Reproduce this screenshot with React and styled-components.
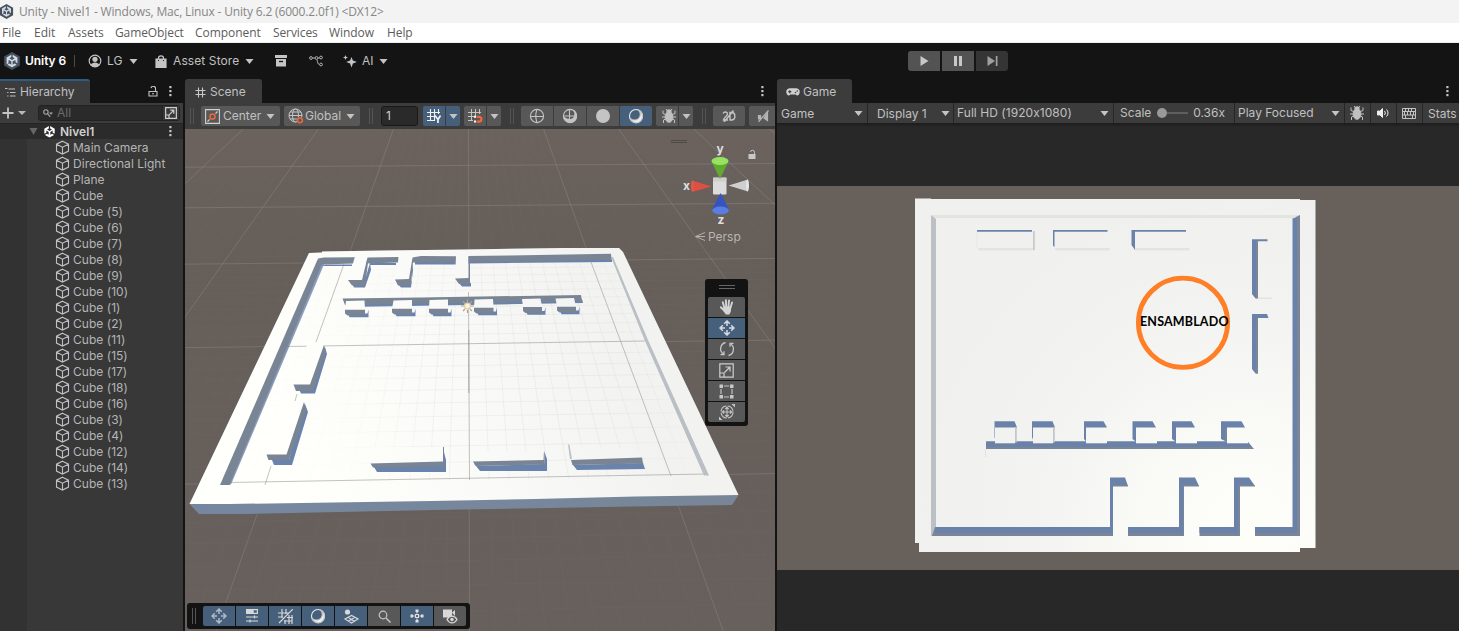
import React from "react";
import styled, { createGlobalStyle } from "styled-components";

const Global = createGlobalStyle`
  * { box-sizing: border-box; }
  html, body { margin: 0; padding: 0; background: #141414; overflow: hidden; }
  svg { display: block; flex: none; }
`;

const Editor = styled.div`
  width: 1459px;
  height: 631px;
  display: flex;
  flex-direction: column;
  overflow: hidden;
  background: #141414;
  color: #c0c0c0;
  font-family: Inter, "Liberation Sans", sans-serif;
  font-size: 12px;
  font-feature-settings: "calt" 0;
  white-space: nowrap;
`;

const TitleBar = styled.div`
  height: 23px;
  flex: none;
  display: flex;
  align-items: center;
  background: #f3f3f3;
  color: #868686;
  font: 12px/22px "Open Sans", "Noto Sans", sans-serif;
  gap: 6px;
`;

const TitleText = styled.span`
  letter-spacing: -0.16px;
`;

const MenuBar = styled.div`
  height: 20px;
  flex: none;
  display: flex;
  background: #fff;
  border-bottom: 1px solid #e9eeee;
  color: #5c5c5c;
  font: 12px/19px "Open Sans", "Noto Sans", sans-serif;
  padding-left: 2px;
`;

const MenuItem = styled.span`
  width: ${(p) => p.$w}px;
  letter-spacing: ${(p) => p.$ls || 0}px;
`;

const MainToolbar = styled.div`
  height: 36px;
  flex: none;
  display: flex;
  align-items: center;
  padding-left: 3px;
`;

const Label = styled.span`
  width: ${(p) => (p.$w ? `${p.$w}px` : "auto")};
  margin-left: ${(p) => p.$ml || 0}px;
  letter-spacing: ${(p) => p.$ls || 0}px;
  font-weight: ${(p) => (p.$bold ? 600 : 400)};
  color: ${(p) => p.$color || "inherit"};
  line-height: 16px;
  flex: none;
`;

const Slot = styled.span`
  width: ${(p) => p.$w}px;
  margin-left: ${(p) => p.$ml || 0}px;
  display: flex;
  justify-content: center;
  flex: none;
`;

const Divider = styled.span`
  width: 1px;
  height: 12px;
  background: #4a4a4a;
  flex: none;
`;

const PlayGroup = styled.div`
  display: flex;
  gap: 2px;
  margin-left: ${(p) => p.$ml}px;
`;

const PlayButton = styled.div`
  width: 32px;
  height: 20px;
  display: flex;
  align-items: center;
  justify-content: center;
  background: ${(p) => (p.$dim ? "#353535" : "#535353")};
  border-radius: ${(p) => p.$r || 0};
`;

const Workspace = styled.div`
  flex: 1;
  display: flex;
  gap: 2px;
  min-height: 0;
`;

const Panel = styled.section`
  width: ${(p) => p.$w}px;
  flex: none;
  display: flex;
  flex-direction: column;
  min-height: 0;
`;

const TabStrip = styled.div`
  height: 24px;
  flex: none;
  display: flex;
  align-items: center;
`;

const Tab = styled.div`
  width: ${(p) => p.$w}px;
  height: 24px;
  padding-left: ${(p) => p.$pl}px;
  display: flex;
  align-items: center;
  background: #3c3c3c;
  border-top: ${(p) => (p.$active ? "2px solid #2c5d87" : "2px solid #3c3c3c")};
  border-radius: ${(p) => (p.$active ? "0 3px 0 0" : "3px 3px 0 0")};
  flex: none;
`;

const HierarchyTools = styled.div`
  height: 20px;
  flex: none;
  display: flex;
  align-items: center;
  background: #3c3c3c;
  padding-left: 2px;
`;

const SearchBox = styled.div`
  width: 142px;
  height: 16px;
  margin-left: 12px;
  display: flex;
  align-items: center;
  background: #2a2a2a;
  border: 1px solid #222;
  border-radius: 3px;
  color: #6c6c6c;
`;

const SearchAction = styled.div`
  width: 17px;
  height: 14px;
  margin-left: auto;
  display: flex;
  align-items: center;
  justify-content: center;
  background: #383838;
  border-left: 1px solid #222;
`;

const SceneRow = styled.div`
  height: 16px;
  flex: none;
  display: flex;
  align-items: center;
  background: #2b2b2b;
  border-top: 1px solid #242424;
  padding-left: 29px;
`;

const Tree = styled.div`
  flex: 1;
  padding-left: 27px;
  background: linear-gradient(90deg, #323232 27px, #383838 27px);
`;

const TreeRow = styled.div`
  height: 16px;
  padding-left: 28px;
  display: flex;
  align-items: center;
  gap: 3px;
  color: #b5b5b5;
  line-height: 15px;
  letter-spacing: 0.03px;
`;

const SceneTools = styled.div`
  height: 26px;
  flex: none;
  display: flex;
  align-items: center;
  background: #3c3c3c;
  padding-left: 5px;
  overflow: hidden;
`;

const Grip = styled.span`
  width: 4px;
  height: 16px;
  margin-left: ${(p) => p.$ml || 0}px;
  border-left: 1px solid #555;
  border-right: 1px solid #555;
  flex: none;
`;

const ToolButton = styled.div`
  width: ${(p) => p.$w}px;
  height: 20px;
  margin-left: ${(p) => p.$ml || 0}px;
  padding-left: ${(p) => p.$pl || 0}px;
  display: flex;
  align-items: center;
  justify-content: ${(p) => (p.$pl ? "flex-start" : "center")};
  background: ${(p) => (p.$on ? "#46607c" : "#585858")};
  border-radius: ${(p) => p.$r || "2px"};
  flex: none;
`;

const NumberField = styled.div`
  width: 37px;
  height: 20px;
  margin-left: 8px;
  padding-left: 4px;
  background: #2a2a2a;
  border: 1px solid #191919;
  border-radius: 3px;
  line-height: 18px;
  color: #d0d0d0;
  flex: none;
`;

const Viewport = styled.div`
  position: relative;
  flex: 1;
  min-height: 0;
`;

const ToolPalette = styled.div`
  position: absolute;
  left: 520px;
  top: 150px;
  width: 43px;
  height: 147px;
  padding: 0 3px;
  background: #131313;
  border-radius: 3px;
  display: flex;
  flex-direction: column;
  gap: 1px;
`;

const PaletteGrip = styled.div`
  width: 16px;
  height: 4px;
  margin: 6px auto 7px;
  border-top: 1px solid #666;
  border-bottom: 1px solid #666;
  flex: none;
`;

const OverlayBar = styled.div`
  position: absolute;
  left: 2px;
  top: 474px;
  width: 283px;
  height: 26px;
  padding-left: 5px;
  background: #131313;
  border-radius: 3px;
  display: flex;
  align-items: center;
`;

const OverlayButtons = styled.div`
  display: flex;
  gap: 1px;
  margin-left: 7px;
`;

const GameTools = styled.div`
  height: 20px;
  flex: none;
  display: flex;
  align-items: center;
  background: #3c3c3c;
  overflow: hidden;
`;

const GameCell = styled.div`
  width: ${(p) => p.$w}px;
  height: 20px;
  padding-left: ${(p) => p.$pl || 0}px;
  padding-right: ${(p) => p.$pr || 0}px;
  display: flex;
  align-items: center;
  justify-content: ${(p) => (p.$center ? "center" : "space-between")};
  border-right: ${(p) => (p.$last ? 0 : "1px solid #262626")};
  flex: none;
`;

const Slider = styled.span`
  width: 31px;
  height: 10px;
  display: flex;
  align-items: center;
  &::before { content: ""; width: 10px; height: 10px; border-radius: 50%; background: #999; }
  &::after { content: ""; flex: 1; height: 2px; background: #5e5e5e; }
`;

const Letterbox = styled.div`
  flex: 1;
  padding-top: 63px;
  background: linear-gradient(#1c1c1c, #282828 4px);
`;

/* ---------- icons ---------- */

const Icon = ({ s = 14, w, h, children, c = "#c4c4c4", sw = 1.2 }) => (
  <svg width={w || s} height={h || s} viewBox={`0 0 ${w || s} ${h || s}`} fill="none" stroke={c} strokeWidth={sw}>
    {children}
  </svg>
);

const Arrow = ({ c = "#c4c4c4" }) => (
  <Icon w={9} h={5} c="none"><path d="M0.5 0h8l-4 5z" fill={c} /></Icon>
);

const Dots = () => (
  <Icon w={3} h={11} c="none">
    <g fill="#c4c4c4"><rect x=".3" y="0" width="2.2" height="2.2" /><rect x=".3" y="4" width="2.2" height="2.2" /><rect x=".3" y="8" width="2.2" height="2.2" /></g>
  </Icon>
);

const UnityMark = ({ s = 16, plain }) => (
  <svg width={s} height={s} viewBox="0 0 16 16">
    {!plain && <path d="M8 0l7 4v8l-7 4-7-4V4z" fill="#46525f" />}
    <path d={plain ? "M7.2 1.2v3L5 5.6l3 1.7 3-1.7-2.2-1.4v-3l5.6 3.3v6.4l-2.5-1.4V6.7L9 8.5v3.6l2.2-1.3 2.5 1.4L8 15.3l-5.7-3.1 2.5-1.4L7 12.1V8.5L4.1 6.7v2.8l-2.5 1.4V4.5z" : "M7.4 2.5v2L5.6 5.6 8 7l2.4-1.4-1.8-1.1v-2l4.2 2.4v5l-1.7-1V7L8.6 8.3v3l1.8-1 1.7 1L8 13.6l-4.1-2.3 1.7-1 1.8 1v-3L4.9 7v2.9l-1.7 1v-6z"} fill={plain ? "#fff" : "#d5dbe2"} />
  </svg>
);

const CubeIcon = () => (
  <Icon s={15} c="#c0c0c0" sw={1.1}>
    <path d="M7.5 1.2l6 3v6.9l-6 3-6-3V4.2z M1.5 4.2l6 3 6-3 M7.5 7.2v6.9" />
  </Icon>
);

const BugIcon = () => (
  <Icon s={16} c="#c0c0c0" sw={1}>
    <ellipse cx="8" cy="9" rx="3.9" ry="5.3" fill="#c0c0c0" />
    <circle cx="8" cy="3.8" r="2.6" fill="#c0c0c0" stroke="none" />
    <path d="M5 1l1.5 2M11 1L9.500 3M4.500 6.500L2 5.500V2.500M11.500 6.500L14 5.500V2.500M4.500 9H1M11.500 9h3.500M4.500 11L2.500 12v3M11.500 11l2 1v3" />
  </Icon>
);

const GridGlyph = ({ c = "#c8c8c8" }) => (
  <Icon s={11} c={c} sw={1.1}><path d="M3.500 .5v10M7.500 .5v10M.5 3.500h10M.5 7.500h10" /></Icon>
);

const MoveIcon = ({ c = "#d4dbe3", s = 16 }) => (
  <svg width={s} height={s} viewBox="0 0 16 16" fill="none" stroke={c} strokeWidth="1.500">
    <path d="M8 1.500v4.500M8 10v4.500M1.500 8H6M10 8h4.500M5.200 3.800L8 1l2.800 2.800M5.200 12.200L8 15l2.800-2.800M3.800 5.200L1 8l2.800 2.800M12.200 5.200L15 8l-2.800 2.800" />
  </svg>
);

const HandIcon = () => (
  <Icon s={16} c="none">
    <g stroke="#d4d4d4" strokeWidth="1.900" strokeLinecap="round">
      <path d="M5.300 8.500L3.800 3.200M7.200 8L6.900 1.300M9.400 8l.6-6.500M11.300 9l1.800-5.500M5.500 11.800L1.800 8.300" />
    </g>
    <path d="M4.600 7.500h7.700l-.5 5L10.300 15.500H6.800L4 11.500z" fill="#d4d4d4" />
  </Icon>
);

const RotateIcon = () => (
  <Icon s={16} sw={1.3}><path d="M6.500 1.500A6.500 6.500 0 0 0 4.500 13.200M9.500 14.500A6.500 6.500 0 0 0 11.500 2.800M1.500 13.700h3.500v-3.500M14.500 2.300H11v3.500" /></Icon>
);

const ScaleIcon = ({ s = 15 }) => (
  <svg width={s} height={s} viewBox="0 0 15 15" fill="none" stroke="#cdcdcd" strokeWidth={s < 15 ? 1.500 : 1.200}><path d="M.8.800h13.400v13.400H.800zM.8 10h4.200v4.200M5.500 9.500l5-5M6.500 4h4.500v4.500" /></svg>
);

const RectIcon = () => (
  <Icon s={15}><path d="M5 2h5M5 13h5M2 5v5M13 5v5" /><g fill="#c8c8c8" stroke="none"><path d="M.500.500h3.500V4H.500zM11 .500h3.500V4H11zM.500 11h3.500v3.500H.500zM11 11h3.500v3.500H11z" /></g></Icon>
);

const TransformIcon = () => (
  <Icon s={16} sw={1.100}><circle cx="8" cy="8" r="6" strokeDasharray="8 1.400" /><path d="M8 3.500v9M3.500 8h9M6.300 5L8 3.300 9.700 5M6.300 11L8 12.700 9.700 11M5 6.300L3.300 8 5 9.700M11 6.300L12.700 8 11 9.700" /><path d="M12.500 0H16V3.500zM0 12.500V16H3.500z" fill="#c4c4c4" stroke="none" /></Icon>
);

const SphereIcon = ({ kind }) => (
  <Icon s={16} sw={1.1}>
    {kind === "wire" && <><circle cx="8" cy="8" r="6.600" /><path d="M1.400 8.500h13.200M8 1.400c-1.500 4-1.500 9 0 13.200" /></>}
    {kind === "half" && <><circle cx="8" cy="8" r="6.600" /><path d="M12 2.500C14 6 13 10.500 9 11.500c-3 .5-5-.5-7-2 1.500 4.500 6 6 9.500 4s3.800-8 .5-11z" fill="#c4c4c4" /><path d="M1.400 8h11M7.500 1.400v10" /></>}
    {kind === "solid" && <circle cx="8" cy="8" r="7" fill="#c4c4c4" stroke="none" />}
    {kind === "lit" && <><circle cx="8" cy="8" r="6.500" stroke="#eaeaea" /><path d="M10.500 2C14 6 12 11.500 7 12c-2 .2-4-.8-5-2 1.500 5 8 6.500 11 2.500 2.700-3.700 1.500-8.500-2.500-10.500z" fill="#eee" /></>}
  </Icon>
);

const GlobeIcon = () => (
  <Icon s={16} sw={1}><circle cx="7.500" cy="7.500" r="6.500" /><ellipse cx="7.500" cy="7.500" rx="3" ry="6.500" /><path d="M1 7.500h13M2 4h11M2 11h8" /><circle cx="12" cy="12.300" r="3.300" fill="#585858" stroke="none" /><circle cx="12" cy="12.300" r="2.400" stroke="#f0673c" strokeWidth="1.500" /></Icon>
);

const CenterIcon = () => (
  <Icon s={15} c="#d0d0d0" sw={1.1}><path d="M.6.600h13.800v13.800H.600z" /><path d="M2.500 12.500l2-2M10.500 4.500l2-2" /><circle cx="7.500" cy="7.500" r="2.600" stroke="#f0673c" strokeWidth="1.500" /></Icon>
);

const SnapGridIcon = () => (
  <Icon s={16} c="#f0f0f0" sw={1.1}><path d="M4.500 1v12M8.500 1v12M12.500 1v5M1 4.500h13M1 8.500h8M1 12.500h7" /><path d="M9 7.500l3 4 2.500-4M12 11.500V15" strokeWidth="1.700" /></Icon>
);

const MagnetIcon = () => (
  <Icon s={16} sw={1}><path d="M4.500 1v12M8.500 1v7M12.500 1v5M1 4.500h13M1 8.500h6M1 12.500h5" /><path d="M9.500 8.800h2.500a2.400 2.400 0 0 1 0 4.800H9.500" stroke="#f0673c" strokeWidth="2.200" /><path d="M7 8.800h2M7 13.600h2" stroke="#fff" strokeWidth="2" /></Icon>
);

/* ---------- scene view ---------- */

const FACE = "#798595";
const SHADE = "#6a83ad";

const SceneGrid = ({ minorOnly }) => {
  const lines = [];
  for (let i = -60; i <= 60; i++) {
    const major = i % 10 === 0;
    if (major && minorOnly) continue;
    const x = (y) => 468.5 + ((i * 11.1) * (y + 82)) / 312;
    lines.push(<path key={`v${i}`} d={`M${x(129)} 129L${x(631) + 1} 631`} opacity={major ? 0.5 : 0.07} />);
  }
  for (let j = -10; j <= 40; j++) {
    const major = j % 10 === 0;
    if (major && minorOnly) continue;
    const r = 1.783 + j * 0.0565;
    const y = 1000 / r - 82;
    const t = y * 0.011;
    lines.push(<path key={`h${j}`} d={`M185 ${y + t}L775 ${y - t}`} opacity={major ? 0.5 : j < 22 ? 0.07 : 0.02} />);
  }
  return <g stroke={minorOnly ? "#7f7f7b" : "#8a8580"} strokeWidth="1">{lines}</g>;
};

const blocks = [
  [345, 309.5, 20, 346, 301], [392, 308.5, 20, 393.5, 300.5], [429, 308.5, 19, 429.5, 300],
  [474, 307.5, 19.500, 474.500, 299.500], [523, 307, 19, 522, 299], [557, 306.5, 19, 555.500, 298.500],
];

const SceneView = () => (
  <svg width="590" height="502" viewBox="185 129 590 502">
    <defs>
      <linearGradient id="sky" x1="0" y1="0" x2="0" y2="1"><stop offset="0" stopColor="#6b625e" /><stop offset=".25" stopColor="#655e59" /><stop offset="1" stopColor="#67605c" /></linearGradient>
      <linearGradient id="white" gradientUnits="userSpaceOnUse" x1="300" y1="500" x2="640" y2="380"><stop offset="0" stopColor="#fffffb" /><stop offset=".5" stopColor="#fafaf8" /><stop offset="1" stopColor="#f2f2f1" /></linearGradient>
      <radialGradient id="fade" gradientUnits="userSpaceOnUse" cx="520" cy="385" r="190"><stop offset=".5" stopColor="#fff" /><stop offset="1" stopColor="#333" /></radialGradient>
      <mask id="mid" maskUnits="userSpaceOnUse" x="185" y="129" width="590" height="502"><path d="M323 264L611 258 705 476 229 485z" fill="url(#fade)" /></mask>
      <filter id="soft" x="-10%" y="-10%" width="120%" height="120%"><feGaussianBlur stdDeviation=".7" /></filter>
      <linearGradient id="front" x1="0" x2="1"><stop offset="0" stopColor="#7587a0" /><stop offset="1" stopColor="#798698" /></linearGradient>
    </defs>
    <rect x="185" y="129" width="590" height="502" fill="url(#sky)" />
    <SceneGrid />
    <path d="M309 253L322 252.500V251.500L384 250.500 465 249.500 564 248H619L623 252 738.500 495 732 505 632 506.500 460 509.500 247 514H199L189.500 504z" fill="url(#front)" />
    <path d="M309 253L322 252.500V251.500L384 250.500 465 249.500 564 248H619L623 252 738.500 495 635 496.500 535 499 432 501 333 502.500 229 504H189.500z" fill="url(#white)" />
    <g mask="url(#mid)"><SceneGrid minorOnly /></g>
    <path d="M344 264L316 342M287 346.500L645 341M591 262L671 476M229 482.500L706 474M271 466L265 485M297 394L295 401M468.500 292L469.500 480" stroke="#9a9a96" strokeWidth="1" fill="none" opacity=".6" />
    <path d="M468.800 330V393" stroke="#8d8d89" strokeWidth="1.300" opacity=".5" />
    <path d="M611 257L613 257 648 340 709 475.500H704L645 341z" fill="#b9bfc4" />
    <g filter="url(#soft)" fill={SHADE}>
      <path d="M320 261L325 262 231 484.500 222 484.500z" opacity=".8" />
      <path d="M325 264.500H352V266H322zM370 263H396V265H370zM415 262H456V264.500H415zM468 261L612 259.500V262L468 263.500z" />
      <path d="M352 283L364 283 370 263 371 270 365 287.500 354 287.500zM398 284L412 281V263L413 270 411 287.500H401zM459 283H471V286.500H462zM346 303L582 299 583 303 347 307z" />
      <path d="M299 389H312L325 347 327 354 315 393.500H301zM272 460H289L305 404 308 412 292 465H274zM374 467L443 465 444 452 446 460V472H377zM476 466L545 464 544 451 547 459V471H480zM573 465L643 463 645 469 577 470z" />
    </g>
    <path d="M318 258.500L322 264 229.500 485H220z" fill={FACE} />
    <path d="M318 258.500L324 257.500 355 257.200V263.500L321 264.500zM367.500 257.500L398.500 257V262.500L366 263.500zM412.500 257.500L421 256 456 256.200V262.200L412 262.500zM468 256L509 255.500 611 253.800 611.500 260 468 262z" fill={FACE} />
    <g fill="url(#white)">
      <path d="M355 256.500L367.500 257 362 280H348zM399 256.500H412.500L409 279.500H395zM456 256H468.500V279H455z" />
      <path d="M307 345H324L310 384.500H293.500zM283 402H304L286.500 454.500H266.500zM374 447H443V461.500L370.500 463.500zM475 451H544V460L473 461.500zM569 445L641 450 642 457.500 571 460z" />
    </g>
    <g fill={FACE}>
      <path d="M348 280H362L367.500 257.500 368 263 365 285.500H352zM395 279.500L409 279 412.500 257.500 413 262 411 285.500H398zM455 278.500L468.500 278V256.500H470V284H459z" />
      <path d="M342.500 298.500L420 297.500 581 295 582 301.500 345 305z" />
      <path d="M293.500 384.500H310L324 345 326 352 313 391H296zM266.500 454.500H286.500L304 402 306.500 410 289 460H268.500zM370.500 463.500L443 461.500V447H444V466.500L373 467.500zM473 461.500L543.500 460 544 451 545 464.500 475.500 466zM571 460L642 457.500 643 463.500 572.500 465z" />
    </g>
    <path d="M568 444L569.500 445 572 459 570 459z" fill="#b9bfc4" />
    {blocks.map(([x, y, w, tx, ty]) => (
      <g key={x}>
        <path d={`M${x + 3} ${y + 4}h${w - 0.5}l1 -4v7.800h${-w + 1}z`} fill={SHADE} filter="url(#soft)" />
        <path d={`M${x} ${y}h${w}v6H${x + 2.5}l-2.500 -2z`} fill={FACE} />
        <path d={`M${tx} ${ty}l18.500 -.5L${x + w} ${y}H${x}z`} fill="url(#white)" />
      </g>
    ))}
    <g stroke="#b0a68e" strokeWidth="1.200"><path d="M467.500 299.500v3M467.500 310v3M461 306h3M471 306h3M463 301.500l2 2M472 301.500l-2 2M463 311l2-2M472 311l-2-2" /><circle cx="467.500" cy="306" r="3" fill="#fff2cf" stroke="#d8cdb0" /></g>

    <path d="M671 140.500h16M671 142.500h16" stroke="#4e4946" />
    <g>
      <rect x="713" y="177.500" width="13.500" height="17" rx="1" fill="#dcdcdc" />
      <path d="M713 177.500h13.500v4H713z" fill="#c5c5c5" opacity=".6" />
      <path d="M711.500 161.500h17L720 179z" fill="#62a832" /><ellipse cx="720" cy="161" rx="8.500" ry="4" fill="#98e35d" />
      <path d="M712 209.500h17L720.500 193z" fill="#3554c2" /><ellipse cx="720.500" cy="210.500" rx="8.300" ry="4" fill="#5b7de2" />
      <path d="M692 180.500L711.500 186.500 692 192z" fill="#df5043" /><ellipse cx="692.500" cy="186" rx="1.500" ry="5.700" fill="#e0594c" />
      <path d="M728.500 185.500L748 179.500V191.500z" fill="#cfcfcf" /><ellipse cx="747.500" cy="185.500" rx="1.500" ry="6" fill="#e4e4e4" />
    </g>
    <g fill="#dedede" fontFamily="Inter, sans-serif" fontSize="12" fontWeight="700">
      <text x="716.500" y="153">y</text><text x="683" y="190">x</text><text x="717.500" y="224">z</text>
    </g>
    <path d="M748.500 154h7v5h-7z" fill="#c8c8c8" /><path d="M754.500 154v-1.500a2 2 0 0 0-4 -.5" fill="none" stroke="#c8c8c8" />
    <path d="M705 232.500L695.500 236.500 705 240.500M705 236.500H696" stroke="#b4b0ad" fill="none" />
    <text x="708" y="241" fontSize="12" fill="#b8b5b2" fontFamily="Inter, sans-serif">Persp</text>
  </svg>
);

/* ---------- game view ---------- */

const EDGE = "#6a82a9";
const RIM = "#7a8596";
const stalls = [[994.500, 995, 1015, 1], [1032, 1033, 1053, 1], [1084, 1086, 1104, 0], [1132.500, 1136, 1153, 0], [1172, 1176, 1192, 0], [1221, 1227, 1242, 0]];
const posts = [[1110, 1113, 1125, 1128], [1179, 1184, 1195, 1199], [1234, 1240, 1249, 1255]];

const GameView = () => (
  <svg width="682" height="384" viewBox="777 186 682 384">
    <defs>
      <radialGradient id="lit" gradientUnits="userSpaceOnUse" cx="1250" cy="530" r="330"><stop offset="0" stopColor="#fefef9" /><stop offset=".3" stopColor="#fafaf7" /><stop offset=".65" stopColor="#f3f3f1" /><stop offset="1" stopColor="#f0f0ee" /></radialGradient>
    </defs>
    <rect x="777" y="186" width="682" height="384" fill="#68605b" />
    <path d="M915 198.500H931V199H1300V200H1315.500V548H1300V552H919V543H915z" fill="url(#lit)" />
    <path d="M931 215H1300L1296 218H935z" fill="#e3e3e1" />
    <path d="M931 215L936 219V527L932 536H931z" fill="#bbc0c4" />
    <path d="M1300 215V536H1296V217z" fill={RIM} /><path d="M1292.500 218.500L1297 217V533H1292.500z" fill={EDGE} />
    {[[932, 1113], [1128, 1184], [1199.500, 1240], [1255, 1300]].map(([a, b]) => (
      <g key={a}><rect x={a} y="527" width={b - a} height="9" fill={RIM} /><rect x={a === 932 ? 935 : a} y="527" width={Math.min(b, 1297) - a - (a === 932 ? 3 : 0)} height="6" fill={EDGE} /></g>
    ))}
    <path d="M931 527H935L932 536H931z" fill="#bbc0c4" />
    {posts.map(([a, b, c, d], i) => (
      <g key={a}>
        <path d={`M${a} 477.500H${c}L${d} 486H${b}V534H${a}z`} fill={EDGE} />
        <path d={`M${b} 485H${d - 0.500}L${d} 486.500H${b}z`} fill={RIM} />
        {i > 0 && <rect x={b - i} y="485" width={i} height="51" fill={RIM} />}
      </g>
    ))}
    <path d="M986 441.500H1247.500L1254 449H986z" fill={RIM} /><path d="M986 441.500H1247.500L1252 447H986z" fill={EDGE} />
    <path d="M985.500 449v8" stroke="#e2e2e0" />
    {stalls.map(([l, b, r, side]) => (
      <g key={l}>
        <path d={`M${l} 421.200H${r - 0.500}L${r + (side ? 2 : 3)} 427.500V428H${b + 1}V442.500L${l} ${side ? 437 : 439}z`} fill={EDGE} />
        <rect x={b} y="427.500" width={side ? 20 : 21} height="15.800" fill="url(#lit)" />
        {side === 1 && <path d={`M${r} 427h1.800v15.500h-1.800z`} fill="#c4c7c9" />}
      </g>
    ))}
    <path d="M1225 428H1227V442L1225 440z" fill={RIM} />
    <path d="M977 230H1032V231.800H977zM1053 230H1107.500V231.800H1054.500V247L1053 245.500zM1131.500 230H1186V231.800H1135V250L1131.500 245z" fill={EDGE} />
    <path d="M978 248H1034.500V250.500H979zM1054.500 248H1110L1109 250.500H1056zM1135 248H1190L1189 250.500H1135zM1257 297.500H1273L1271 299H1256zM976.500 232H977.200V247H976.500z" fill="#e3e3df" />
    <path d="M1033 231H1034.800V250H1033z" fill="#c9cbcd" />
    <path d="M1252 239.200H1267.500V241.200H1257.800V298.500H1255.500L1252 294zM1252 314H1267L1268.500 318H1257.800V373.500H1255.500L1252 369z" fill={EDGE} />
    <path d="M1256 241.500H1258V297L1256 298.500zM1256 318H1258V373.500H1256z" fill={RIM} />
    <circle cx="1183" cy="322.800" r="44.600" fill="none" stroke="#ff7f27" strokeWidth="4.800" />
    <text x="1140" y="326" fontFamily="Lato, sans-serif" fontSize="12.500" fontWeight="700" textLength="88.500" fill="#000">ENSAMBLADO</text>
  </svg>
);

const menus = [["File", 32, 0], ["Edit", 34, 0], ["Assets", 47, 0], ["GameObject", 80, -0.1], ["Component", 78, -0.05], ["Services", 56, -0.1], ["Window", 58, -0.05], ["Help", 40, -0.1]];
const objects = ["Main Camera", "Directional Light", "Plane", "Cube", ...[5, 6, 7, 8, 9, 10, 1, 2, 11, 15, 17, 18, 16, 3, 4, 12, 14, 13].map((n) => `Cube (${n})`)];

export default function App() {
  return (
    <Editor>
      <Global />
      <TitleBar>
        <Slot $w={13}><UnityMark s={15} /></Slot>
        <TitleText>Unity - Nivel1 - Windows, Mac, Linux - Unity 6.2 (6000.2.0f1) &lt;DX12&gt;</TitleText>
      </TitleBar>
      <MenuBar>{menus.map(([m, w, ls]) => <MenuItem key={m} $w={w} $ls={ls}>{m}</MenuItem>)}</MenuBar>

      <MainToolbar>
        <UnityMark s={18} />
        <Label $ml={4} $w={49} $bold $color="#fff" $ls={-0.05}>Unity 6</Label>
        <Divider />
        <Slot $ml={13} $w={14}><Icon s={14}><circle cx="7" cy="7" r="5.800" /><circle cx="7" cy="5.300" r="2.600" fill="#c4c4c4" stroke="none" /><path d="M2.500 11c1.500-3.500 7.500-3.500 9 0-2 2.500-7 2.500-9 0z" fill="#c4c4c4" stroke="none" /></Icon></Slot>
        <Label $ml={5} $w={22}>LG</Label>
        <Arrow />
        <Slot $ml={17} $w={12}><Icon w={12} h={13}><path d="M1 4h10v8.500H1z" fill="#c4c4c4" /><path d="M3.500 5V3a2.500 2.200 0 0 1 5 0v2" /><path d="M3 5.500h1M8 5.500h1" stroke="#222" /></Icon></Slot>
        <Label $ml={6} $w={72} $ls={0.1}>Asset Store</Label>
        <Arrow />
        <Slot $ml={21} $w={12}><Icon w={12} h={12} c="none"><path d="M0 0h12v3H0zM1 4h10v7.500H1z" fill="#c4c4c4" /><path d="M4 6.500h4" stroke="#141414" strokeWidth="1.300" /></Icon></Slot>
        <Slot $ml={22} $w={14}><Icon w={14} h={12} c="#b0b0b0" sw={1}><circle cx="2" cy="3" r="1.400" /><circle cx="7.500" cy="3" r="1.400" /><circle cx="12" cy="2.500" r="1.400" /><circle cx="12" cy="9.500" r="1.400" /><path d="M3.500 3H6M9 3h1.600M8 4.500c.5 3 1 5 2.500 5" /></Icon></Slot>
        <Slot $ml={20} $w={14}><Icon w={14} h={13} c="none"><path d="M8.500 2l1.400 3.600L13.800 7l-3.900 1.400L8.500 12.500 7.100 8.400 3.200 7l3.900-1.400zM2.500 0l.7 1.800L5 2.500l-1.800.7L2.500 5l-.7-1.800L0 2.500l1.800-.7z" fill="#c4c4c4" /></Icon></Slot>
        <Label $ml={5} $w={17}>AI</Label>
        <Arrow />
        <PlayGroup $ml={520}>
          <PlayButton $r="3px 0 0 3px"><Icon w={9} h={10} c="none"><path d="M.5 0l8 5-8 5z" fill="#c8c8c8" /></Icon></PlayButton>
          <PlayButton><Icon w={8} h={10} c="none"><path d="M0 0h3v10H0zM5 0h3v10H5z" fill="#c8c8c8" /></Icon></PlayButton>
          <PlayButton $dim $r="0 3px 3px 0"><Icon w={11} h={10} c="none"><path d="M.5 0l7.500 5-7.500 5zM8.800 0h1.700v10H8.800z" fill="#a0a0a0" /></Icon></PlayButton>
        </PlayGroup>
      </MainToolbar>

      <Workspace>
        <Panel $w={183}>
          <TabStrip>
            <Tab $w={90} $pl={5} $active>
              <Icon w={11} h={11} c="#c4c4c4"><path d="M3.500 2H10M5 5.500h5.500M5 9h5.500M0 1.500h2.500M2.200 5.500h1.300M2.200 9h1.300" /></Icon>
              <Label $ml={4} $ls={-0.05}>Hierarchy</Label>
            </Tab>
            <Slot $ml={58} $w={10}><Icon w={10} h={11} sw={1.100}><path d="M1 5.500h8v4.500H1zM7.500 5.500V3a2 2 0 0 0-4.500-.8M4 7.800h2" /></Icon></Slot>
            <Slot $ml={10} $w={4}><Dots /></Slot>
          </TabStrip>
          <HierarchyTools>
            <Icon w={12} h={12} sw={1.800}><path d="M6 .500v11M.500 6h11" /></Icon>
            <Slot $ml={4} $w={8}><Icon w={8} h={4} c="none"><path d="M0 0h8l-4 4z" fill="#b8b8b8" /></Icon></Slot>
            <SearchBox>
              <Slot $ml={4} $w={10}><Icon w={10} h={9} c="#a8a8a8" sw={1.100}><circle cx="2.900" cy="3" r="2.200" /><path d="M4.500 4.700L7.300 7.800" /><path d="M6 3.500h4L8 5.800z" fill="#a8a8a8" stroke="none" /></Icon></Slot>
              <Label $ml={4}>All</Label>
              <SearchAction><ScaleIcon s={12} /></SearchAction>
            </SearchBox>
          </HierarchyTools>
          <SceneRow>
            <Icon w={9} h={7} c="none"><path d="M.5 0h8l-4 7z" fill="#666" /></Icon>
            <Slot $ml={5} $w={13}><UnityMark plain s={13} /></Slot>
            <Label $ml={4} $w={109} $bold $color="#cfcfcf">Nivel1</Label>
            <Dots />
          </SceneRow>
          <Tree>{objects.map((o) => <TreeRow key={o}><CubeIcon />{o}</TreeRow>)}</Tree>
        </Panel>

        <Panel $w={590}>
          <TabStrip>
            <Tab $w={77} $pl={10}><GridGlyph /><Label $ml={4}>Scene</Label></Tab>
            <Slot $ml={498} $w={4}><Dots /></Slot>
          </TabStrip>
          <SceneTools>
            <Grip />
            <ToolButton $ml={7} $w={79} $pl={4}><CenterIcon /><Label $ml={3} $w={43}>Center</Label><Arrow /></ToolButton>
            <ToolButton $ml={4} $w={76} $pl={4}><GlobeIcon /><Label $ml={1} $w={41}>Global</Label><Arrow /></ToolButton>
            <Grip $ml={9} />
            <NumberField>1</NumberField>
            <ToolButton $ml={5} $w={22} $on $r="2px 0 0 2px"><SnapGridIcon /></ToolButton>
            <ToolButton $ml={1} $w={14} $on $r="0 2px 2px 0"><Arrow /></ToolButton>
            <ToolButton $ml={4} $w={22} $r="2px 0 0 2px"><MagnetIcon /></ToolButton>
            <ToolButton $ml={1} $w={14} $r="0 2px 2px 0"><Arrow /></ToolButton>
            <Grip $ml={9} />
            <ToolButton $ml={7} $w={32} $r="2px 0 0 2px"><SphereIcon kind="wire" /></ToolButton>
            <ToolButton $ml={1} $w={32} $r="0"><SphereIcon kind="half" /></ToolButton>
            <ToolButton $ml={1} $w={32} $r="0"><SphereIcon kind="solid" /></ToolButton>
            <ToolButton $ml={1} $w={32} $on $r="0 2px 2px 0"><SphereIcon kind="lit" /></ToolButton>
            <ToolButton $ml={4} $w={22} $pl={5} $r="2px 0 0 2px"><BugIcon /></ToolButton>
            <ToolButton $ml={1} $w={14} $r="0 2px 2px 0"><Arrow /></ToolButton>
            <Grip $ml={9} />
            <ToolButton $ml={7} $w={32}><Icon w={14} h={12} sw={1.400}><path d="M1 3.500c1-2 4.500-2 4.500.5C5.500 6 2 7.500 1.500 10H6M8 2.500v7.500h1.500c4.500 0 4.500-7.500 0-7.500zM2 12L11.500.500" /></Icon></ToolButton>
            <ToolButton $ml={4} $w={32} $pl={8}><Icon w={14} h={12} c="#b4b4b4"><path d="M1.500 5.500h2v3.500h-2zM10.500 3v7.500L7 8z" fill="#b4b4b4" /><path d="M1.500 11.800L11.500.500" strokeWidth="1.300" /></Icon></ToolButton>
          </SceneTools>
          <Viewport>
            <SceneView />
            <ToolPalette>
              <PaletteGrip />
              <ToolButton $w={37} $r="2px 2px 0 0"><HandIcon /></ToolButton>
              <ToolButton $w={37} $r="0" $on><MoveIcon /></ToolButton>
              <ToolButton $w={37} $r="0"><RotateIcon /></ToolButton>
              <ToolButton $w={37} $r="0"><ScaleIcon /></ToolButton>
              <ToolButton $w={37} $r="0"><RectIcon /></ToolButton>
              <ToolButton $w={37} $r="0 0 2px 2px"><TransformIcon /></ToolButton>
            </ToolPalette>
            <OverlayBar>
              <Grip />
              <OverlayButtons>
                <ToolButton $w={32} $on $r="2px 0 0 2px"><MoveIcon c="#aeb8c3" /></ToolButton>
                <ToolButton $w={32} $on $r="0"><Icon w={12} h={14} c="#d8d8d8"><path d="M.600.600h10.800v3.800H.600z" /><path d="M.600.600h6.500v3.800h-6.500z" fill="#d8d8d8" /><path d="M0 8h12M0 12h12M8.500 6.500v3M4 10.500v3" /></Icon></ToolButton>
                <ToolButton $w={32} $on $r="0"><Icon s={15} c="#d8d8d8"><path d="M4 0v9M8 0v5M0 4h11M0 8h5M15 0L1 14M7 11v4M11 6v9M14 6v9M6 12h8M9 8.500h6" /></Icon></ToolButton>
                <ToolButton $w={32} $on $r="0"><SphereIcon kind="lit" /></ToolButton>
                <ToolButton $w={32} $on $r="0"><Icon w={15} h={15} c="#d8d8d8"><circle cx="3.500" cy="3" r="2.600" fill="#d8d8d8" stroke="none" /><path d="M1 10l6.500-3.500L14 10l-6.500 4zM4 8.300l6.500 4M4.500 12L11 8.300" /></Icon></ToolButton>
                <ToolButton $w={32} $r="0"><Icon s={13}><circle cx="5" cy="5" r="3.800" /><path d="M8 8l4.500 4.500" strokeWidth="1.500" /></Icon></ToolButton>
                <ToolButton $w={32} $on $r="0"><Icon s={14} c="#e0e0e0"><path d="M7 3v1.500M7 9.500v1.500M3 7h1.500M9.500 7h1.500" /><path d="M5.500 5.500h3v3h-3z" /><g fill="#e0e0e0" stroke="none"><path d="M5.500 .500h3v2.500h-3zM5.500 11h3v2.500h-3zM.500 5.500h2.500v3H.500zM11 5.500h2.500v3H11z" /></g></Icon></ToolButton>
                <ToolButton $w={32} $r="0 2px 2px 0"><Icon w={16} h={15} c="none"><path d="M1 .500h9v8H1zM10 3.500l3-2.500v6z" fill="#d8d8d8" /><path d="M5 10.500c2.500-4.500 7.500-4.500 10 0-2.500 4.500-7.500 4.500-10 0z" stroke="#d8d8d8" strokeWidth="1.300" fill="#585858" /><circle cx="10" cy="10.500" r="1.700" fill="#d8d8d8" /></Icon></ToolButton>
              </OverlayButtons>
            </OverlayBar>
          </Viewport>
        </Panel>

        <Panel $w={682}>
          <TabStrip>
            <Tab $w={75} $pl={9}>
              <Icon w={14} h={8} c="none"><path d="M3.500.300h7a3.500 3.500 0 0 1 3.200 4c-.3 3-2.500 4-4 2.200H4.300C2.800 8.300.600 7.300.3 4.300a3.500 3.500 0 0 1 3.200-4z" fill="#d0d0d0" /><path d="M2.300 3.700h3M3.800 2.200v3" stroke="#3c3c3c" /><circle cx="9.500" cy="4.500" r=".8" fill="#3c3c3c" /><circle cx="11.300" cy="3" r=".8" fill="#3c3c3c" /></Icon>
              <Label $ml={3}>Game</Label>
            </Tab>
            <Slot $ml={593} $w={4}><Dots /></Slot>
          </TabStrip>
          <GameTools>
            <GameCell $w={91} $pl={4} $pr={4}>Game<Arrow /></GameCell>
            <GameCell $w={86} $pl={9} $pr={3}>Display 1<Arrow /></GameCell>
            <GameCell $w={160} $pl={3} $pr={4}><Label $ls={0.05}>Full HD (1920x1080)</Label><Arrow /></GameCell>
            <GameCell $w={121} $pl={6} $pr={9}><Label>Scale</Label><Slider /><Label>0.36x</Label></GameCell>
            <GameCell $w={110} $pl={3} $pr={4}><Label>Play Focused</Label><Arrow /></GameCell>
            <GameCell $w={26} $pl={4}><BugIcon /></GameCell>
            <GameCell $w={26} $center><Icon w={13} h={10} c="#eee" sw={1}><path d="M.5 3h2v4h-2zM3 3l2.500-2.500v9L3 7z" fill="#eee" /><path d="M7.500 3a3 3 0 0 1 0 4M9.500 1.500c2 2 2 5 0 7" /></Icon></GameCell>
            <GameCell $w={26} $pl={5}><Icon w={14} h={11} sw={1}><path d="M.5.500h13v10H.500zM.500 3.500h13M.500 7h13M3.500 0v3.500M6.500 0v3.500M9.500 0v3.500M2.500 3.500V7M5.500 3.500V7M8.500 3.500V7M11.500 3.500V7M3.500 7v3.500M10.500 7v3.500" /></Icon></GameCell>
            <GameCell $w={36} $pl={5} $last>Stats</GameCell>
          </GameTools>
          <Letterbox><GameView /></Letterbox>
        </Panel>
      </Workspace>
    </Editor>
  );
}
